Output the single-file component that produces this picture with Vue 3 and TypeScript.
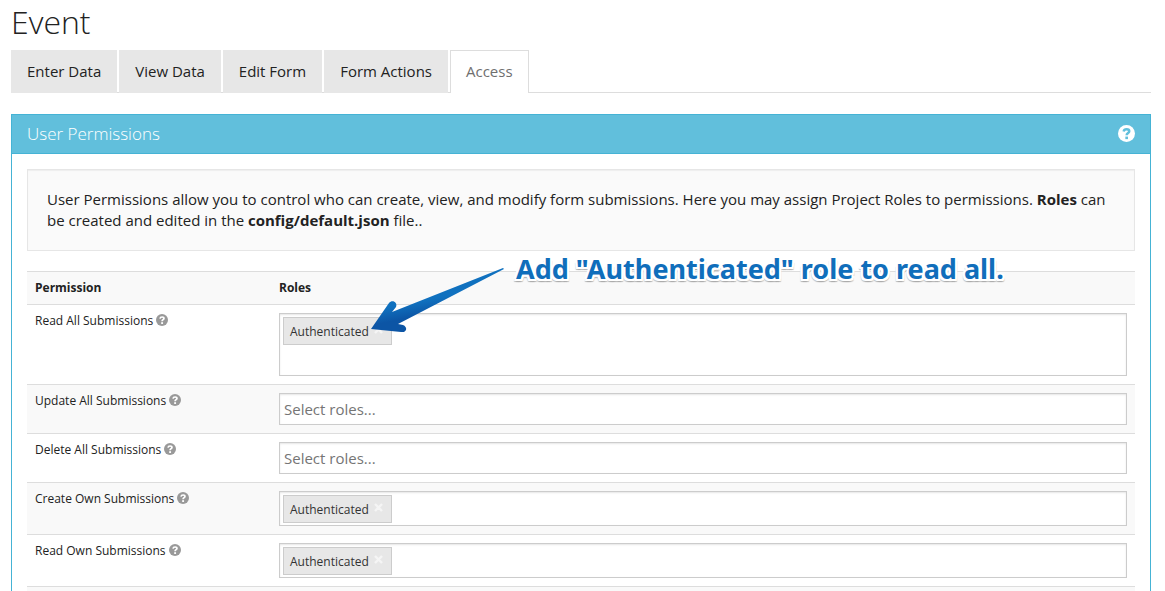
<script setup lang="ts">
import { ref } from 'vue'

interface Permission {
  id: string
  label: string
  roles: string[]
  tall?: boolean
}

const tabs = ['Enter Data', 'View Data', 'Edit Form', 'Form Actions', 'Access']
const activeTab = ref('Access')

const permissions = ref<Permission[]>([
  { id: 'read-all', label: 'Read All Submissions', roles: ['Authenticated'], tall: true },
  { id: 'update-all', label: 'Update All Submissions', roles: [] },
  { id: 'delete-all', label: 'Delete All Submissions', roles: [] },
  { id: 'create-own', label: 'Create Own Submissions', roles: ['Authenticated'] },
  { id: 'read-own', label: 'Read Own Submissions', roles: ['Authenticated'] },
])

function removeRole(permission: Permission, role: string): void {
  permission.roles = permission.roles.filter((r) => r !== role)
}
</script>

<template>
  <main class="page">
    <h1>Event</h1>
    <nav class="tabs">
      <a
        v-for="tab in tabs"
        :key="tab"
        href="#"
        class="tab"
        :class="{ active: tab === activeTab }"
        @click.prevent="activeTab = tab"
      >{{ tab }}</a>
    </nav>

    <section class="panel">
      <header class="panel-heading">
        <h2>User Permissions</h2>
        <button type="button" class="help" aria-label="Help">
          <svg viewBox="0 0 16 16" width="17" height="17">
            <circle cx="8" cy="8" r="8" fill="#fff" />
            <path d="M5.3 6.2C5.6 4.7 6.5 4 8.1 4C9.7 4 10.6 4.8 10.6 5.9C10.6 7.6 8.1 7.5 8.1 9.7" fill="none" stroke="#61bfdc" stroke-width="2.3" />
            <rect x="6.9" y="10.9" width="2.5" height="2.4" fill="#61bfdc" />
          </svg>
        </button>
      </header>
      <div class="panel-body">
        <p class="well">
          User Permissions allow you to control who can create, view, and modify form submissions. Here you may assign
          Project Roles to permissions. <strong>Roles</strong> can be created and edited in the
          <strong>config/default.json</strong> file..
        </p>
        <table>
          <thead>
            <tr>
              <th class="name-column" scope="col">Permission</th>
              <th scope="col">Roles</th>
            </tr>
          </thead>
          <tbody>
            <tr v-for="permission in permissions" :key="permission.id">
              <td>
                <label :for="permission.id">{{ permission.label }}</label>
                <svg class="hint" viewBox="0 0 16 16" width="12" height="12" aria-hidden="true">
                  <circle cx="8" cy="8" r="8" fill="#999" />
                  <path d="M5.3 6.2C5.6 4.7 6.5 4 8.1 4C9.7 4 10.6 4.8 10.6 5.9C10.6 7.6 8.1 7.5 8.1 9.7" fill="none" stroke="#fff" stroke-width="2.3" />
                  <rect x="6.9" y="10.9" width="2.5" height="2.4" fill="#fff" />
                </svg>
              </td>
              <td>
                <div class="roles" :class="{ tall: permission.tall, filled: permission.roles.length > 0 }">
                  <span v-for="role in permission.roles" :key="role" class="role">
                    {{ role }}
                    <button type="button" aria-label="Remove role" @click="removeRole(permission, role)">
                      <svg viewBox="0 0 9 9" width="9" height="9">
                        <path d="M1 1L8 8M8 1L1 8" stroke="#f5f5f5" stroke-width="2.4" />
                      </svg>
                    </button>
                  </span>
                  <input
                    :id="permission.id"
                    type="text"
                    autocomplete="off"
                    :placeholder="permission.roles.length ? '' : 'Select roles...'"
                  />
                </div>
              </td>
            </tr>
          </tbody>
        </table>
        <div class="table-rest"></div>
      </div>
    </section>

    <svg class="arrow" viewBox="0 0 136 68" width="136" height="68" aria-hidden="true">
      <defs>
        <linearGradient id="arrow-fill" x1="0.4" y1="0.3" x2="0.6" y2="0.8">
          <stop offset="0.35" stop-color="#1071bf" />
          <stop offset="0.75" stop-color="#0c55a5" />
        </linearGradient>
      </defs>
      <path
        d="M133 2L134 3L28 58L33 59C38 61 37 67 31 66L1 63L19 37C22 33 28 36 26 41L22 46Z"
        fill="url(#arrow-fill)"
      />
    </svg>
    <div class="callout">Add "Authenticated" role to read all.</div>
  </main>
</template>

<style>
body {
  margin: 0;
  background: #fff;
}
</style>

<style scoped>
.page {
  position: relative;
  box-sizing: border-box;
  height: 100vh;
  overflow: hidden;
  display: flex;
  flex-direction: column;
  padding: 0 14px 0 11px;
  font: 15px/21px "Open Sans", sans-serif;
  color: #222;
}

h1 {
  margin: 0 0 6px;
  font-size: 32px;
  line-height: 44px;
  font-weight: 300;
}

.tabs {
  display: flex;
  gap: 2px;
  border-bottom: 1px solid #ddd;
  margin-bottom: 21px;
}

.tab {
  padding: 10px 15px 11px;
  border: 1px solid #e7e7e7;
  border-bottom: 0;
  margin-bottom: -1px;
  background: #e7e7e7;
  color: #222;
  text-decoration: none;
}

.tab.active {
  background: #fff;
  border-color: #ddd;
  color: #6f6f6f;
}

.panel {
  flex: 1;
  display: flex;
  flex-direction: column;
  border: 1px solid #45b3d5;
  border-bottom: 0;
}

.panel-heading {
  display: flex;
  align-items: flex-start;
  justify-content: space-between;
  padding: 8px 15px;
  background: #61bfdc;
  border-bottom: 1px solid #45b3d5;
}

h2 {
  margin: 0;
  font-size: 17px;
  line-height: 22px;
  font-weight: 300;
  color: #fff;
}

button {
  display: flex;
  padding: 0;
  border: 0;
  background: none;
  cursor: pointer;
}

.help {
  padding-top: 2px;
}

.panel-body {
  flex: 1;
  display: flex;
  flex-direction: column;
  padding: 15px 15px 0;
}

.well {
  margin: 0 0 20px;
  padding: 19px;
  border: 1px solid #e6e6e6;
  background: #fafafa;
  box-shadow: inset 0 1px 1px rgba(0, 0, 0, 0.05);
}

table {
  width: 100%;
  border-collapse: separate;
  border-spacing: 0;
  table-layout: fixed;
  font-size: 12px;
  line-height: 16px;
}

th,
td {
  padding: 8px;
  border-top: 1px solid #ddd;
  text-align: left;
  vertical-align: top;
}

.name-column {
  width: 228px;
}

thead th,
tbody tr:nth-child(even) {
  background: #f9f9f9;
}

.hint {
  margin-left: 3px;
  vertical-align: -1px;
}

.roles {
  display: flex;
  flex-wrap: wrap;
  align-items: flex-start;
  box-sizing: border-box;
  min-height: 32px;
  padding: 3px;
  border: 1px solid #ccc;
  background: #fff;
  box-shadow: inset 0 1px 2px rgba(0, 0, 0, 0.1);
}

.roles.filled {
  padding-bottom: 2px;
}

.roles.tall {
  min-height: 63px;
}

.role {
  display: flex;
  align-items: flex-start;
  gap: 5px;
  padding: 5px 8px 5px 6px;
  border: 1px solid #ccc;
  background: #e7e7e7;
  color: #333;
  line-height: 17px;
  height: 16px;
}

.role button {
  padding-top: 2px;
}

input {
  flex: 1;
  min-width: 0;
  height: 24px;
  padding: 0 1px;
  border: 0;
  outline: 0;
  background: transparent;
  font: inherit;
  font-size: 15px;
  color: #222;
}

input::placeholder {
  color: #757575;
  opacity: 1;
}

.table-rest {
  flex: 1;
  border-top: 1px solid #ddd;
  background: #f9f9f9;
}

.arrow {
  position: absolute;
  left: 370px;
  top: 266px;
}

.callout {
  position: absolute;
  left: 516px;
  top: 252px;
  font: 700 27px/34px "Noto Sans", "Open Sans", sans-serif;
  color: #106ebb;
  white-space: nowrap;
  text-shadow:
    -2px 0 #fff, 2px 0 #fff, 0 -2px #fff, 0 2px #fff,
    -2px -1px #fff, 2px -1px #fff, -2px 2px #fff, 2px 2px #fff,
    0 3px 1px #aaa, -2px 3px 1px #bbb, 2px 3px 1px #bbb;
}
</style>
